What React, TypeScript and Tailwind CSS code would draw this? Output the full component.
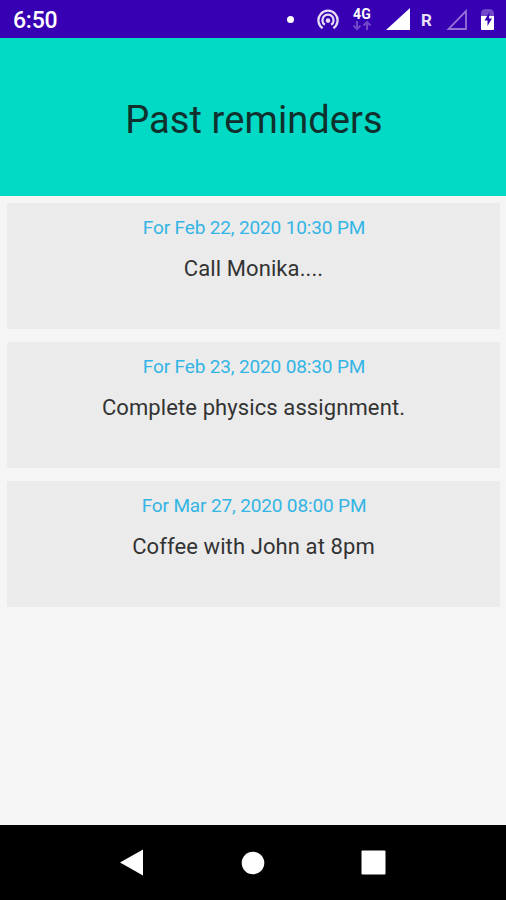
const reminders = [
  { date: 'For Feb 22, 2020 10:30 PM', text: 'Call Monika....' },
  { date: 'For Feb 23, 2020 08:30 PM', text: 'Complete physics assignment.' },
  { date: 'For Mar 27, 2020 08:00 PM', text: 'Coffee with John at 8pm' },
];

export default function App() {
  return (
    <div className="flex h-[900px] w-[506px] flex-col overflow-hidden bg-[#f5f5f5] font-[Roboto,sans-serif]">
      <StatusBar />
      <header className="flex h-[158px] shrink-0 items-center justify-center bg-[#03dac5] pt-[6px] pl-[2px]">
        <h1 className="text-[38px] leading-none tracking-[0.1px] text-[#10302e]">Past reminders</h1>
      </header>
      <main className="flex flex-1 flex-col gap-[13px] pt-[7px] pr-[6px] pl-[7px]">
        {reminders.map((reminder) => (
          <article
            key={reminder.date}
            className="flex h-[126px] flex-col items-center rounded-[2px] bg-[#ebebeb] pt-[13px]"
          >
            <p className="pl-px text-[19px] leading-6 tracking-[-0.14px] text-[#33b5e5]">{reminder.date}</p>
            <p className="mt-[15px] text-[22px] leading-[28px] tracking-[0.1px] text-[#333333]">{reminder.text}</p>
          </article>
        ))}
      </main>
      <NavBar />
    </div>
  );
}

function StatusBar() {
  return (
    <div className="flex h-[38px] shrink-0 items-center justify-between bg-[#3700b3] pr-[12px] pl-[13px] text-white">
      <span className="pt-[2px] text-[23px] leading-none font-medium tracking-[-0.2px]">6:50</span>
      <div className="flex h-full items-center">
        <span className="mr-[23px] h-[7px] w-[7px] rounded-full bg-white"></span>
        <Hotspot />
        <div className="mr-[14px] ml-[13px] flex flex-col items-center">
          <span className="text-[14px] leading-[13px] font-bold tracking-[0.3px]">4G</span>
          <DataArrows />
        </div>
        <svg width="24" height="22" viewBox="0 0 24 22" fill="white">
          <path d="M24 0v22H0z" />
        </svg>
        <span className="mr-[14px] ml-[11px] pt-[2px] text-[17px] leading-none font-bold text-[#e8e0f6]">R</span>
        <svg width="21" height="21" viewBox="0 0 21 21" fill="none" stroke="#9473d6" strokeWidth="1.8">
          <path d="M20 2v18H2.5z" />
        </svg>
        <Battery />
      </div>
    </div>
  );
}

function Hotspot() {
  return (
    <svg width="22" height="20" viewBox="0 0 22 20" fill="none" stroke="#e6dcf7" strokeWidth="2.3">
      <path d="M5.6 19.2a9.6 9.6 0 1 1 10.8 0" />
      <path d="M7.8 15.8a5.6 5.6 0 1 1 6.4 0" />
      <circle cx="11" cy="11.6" r="2.3" fill="#e6dcf7" stroke="none" />
    </svg>
  );
}

function DataArrows() {
  return (
    <svg width="20" height="10" viewBox="0 0 20 10" fill="none" stroke="#7048c9" strokeWidth="2">
      <path d="M5 0v8M1.5 4.5L5 8l3.5-3.5M15 9V1M11.5 4.5L15 1l3.5 3.5" />
    </svg>
  );
}

function Battery() {
  return (
    <svg className="ml-[14px]" width="13" height="22" viewBox="0 0 13 22">
      <path d="M0 8V6q0-5 5-5h3q5 0 5 5v2z" fill="#7048c9" />
      <path d="M0 8h13v13q0 1-1 1H1q-1 0-1-1z" fill="white" />
      <path d="M8.5 4l-5 8.5h3V18l4.500-7.500H8z" fill="#3700b3" />
    </svg>
  );
}

function NavBar() {
  return (
    <nav className="flex h-[75px] shrink-0 items-center justify-center bg-black">
      <svg width="266" height="28" viewBox="0 0 266 28" fill="white">
        <path d="M0 13.5L23 0.5v26z" />
        <circle cx="133" cy="14" r="11.3" />
        <rect x="241.5" y="1.5" width="24" height="24" rx="1" />
      </svg>
    </nav>
  );
}
